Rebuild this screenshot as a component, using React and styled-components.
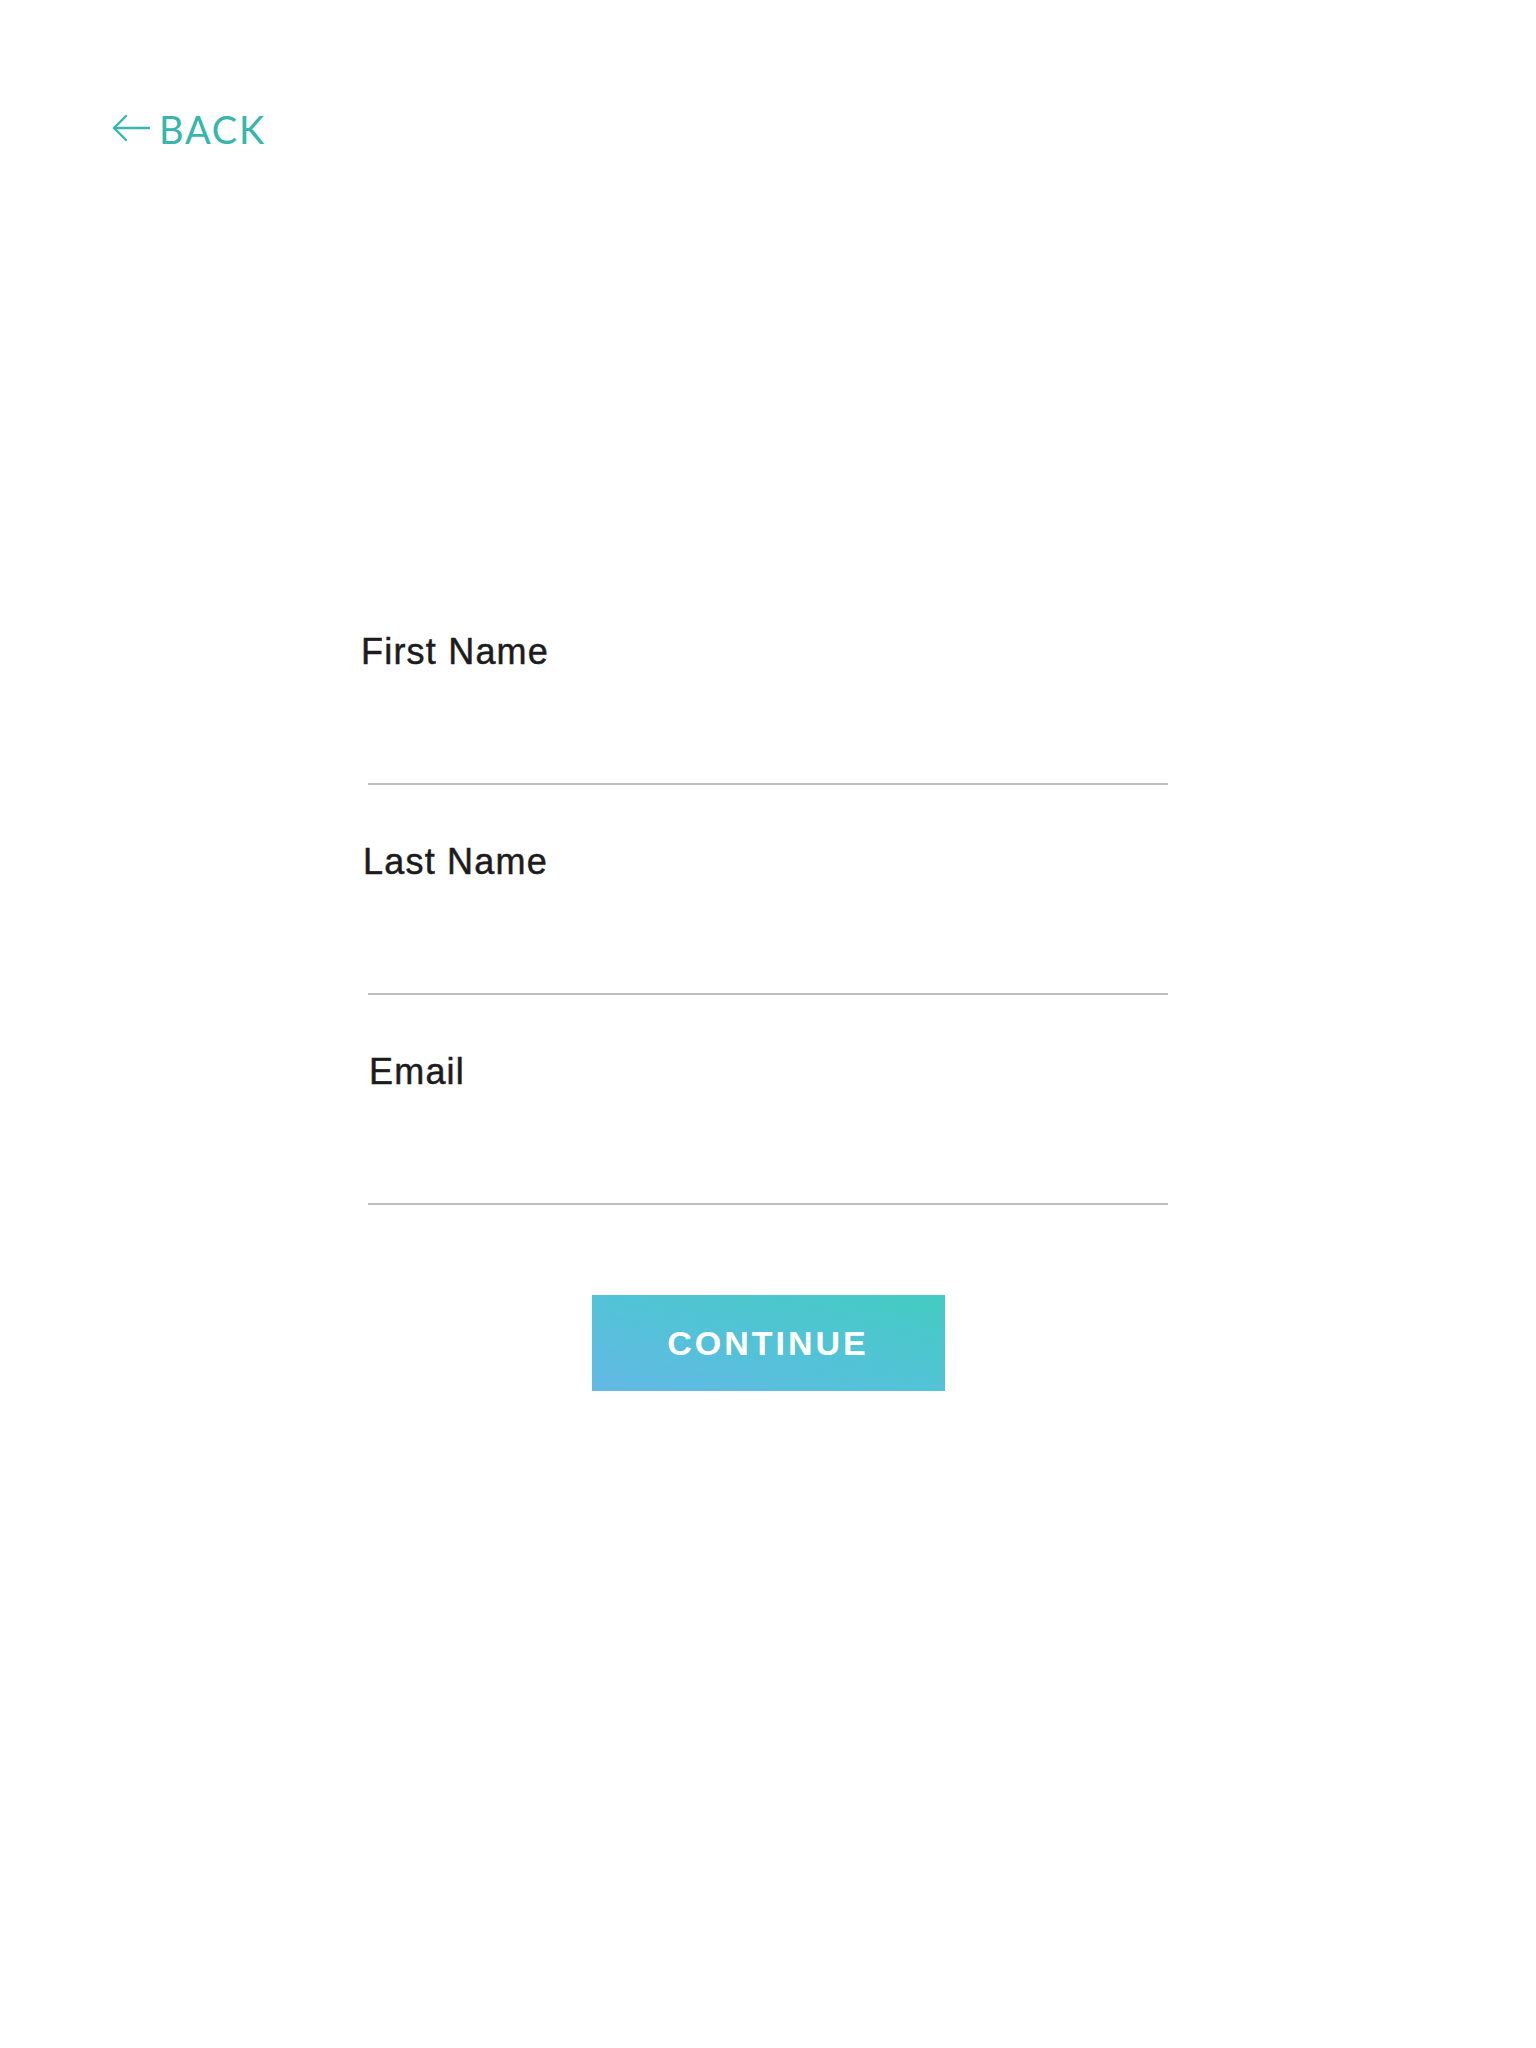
import React from 'react';
import styled, { createGlobalStyle } from 'styled-components';

const GlobalStyle = createGlobalStyle`
  body {
    margin: 0;
    background: #ffffff;
    font-family: "Liberation Sans", Arial, sans-serif;
  }
`;

const Page = styled.div`
  min-height: 2048px;
  padding-top: 110px;
  box-sizing: border-box;
  background: #ffffff;
`;

const Header = styled.header`
  padding-left: 111px;
`;

const BackLink = styled.a`
  display: inline-flex;
  align-items: center;
  gap: 8px;
  height: 38px;
  color: #37b6ae;
  font-family: "Lato", "Liberation Sans", sans-serif;
  font-weight: 400;
  font-size: 38px;
  line-height: 38px;
  letter-spacing: 1.8px;
  text-decoration: none;
  cursor: pointer;

  svg {
    display: block;
    margin-top: -2px;
  }
`;

const Form = styled.form`
  width: 800px;
  margin: 486px auto 0;
  display: flex;
  flex-direction: column;
  gap: 59px;
`;

const Field = styled.label`
  display: flex;
  flex-direction: column;
`;

const Label = styled.span`
  display: block;
  margin-left: ${(p) => p.$shift || 0}px;
  color: #1c1c1c;
  font-size: 36px;
  line-height: 36px;
  letter-spacing: 1.2px;
  -webkit-text-stroke: 0.5px #1c1c1c;
`;

const Input = styled.input`
  display: block;
  width: 100%;
  height: 115px;
  box-sizing: border-box;
  border: none;
  border-bottom: 2px solid #bdbdbd;
  background: transparent;
  outline: none;
  font-family: inherit;
  font-size: 32px;
  padding: 0;
`;

const Button = styled.button`
  display: block;
  width: 353px;
  height: 96px;
  margin: 31px auto 0;
  border: none;
  border-radius: 0;
  background: linear-gradient(to top right, #63b8e5 0%, #52c3d6 50%, #44ccc2 100%);
  color: #ffffff;
  font-family: "Liberation Sans", Arial, sans-serif;
  font-weight: 700;
  font-size: 34px;
  letter-spacing: 3px;
  cursor: pointer;
`;

const fields = [
  { label: 'First Name', type: 'text', shift: -7 },
  { label: 'Last Name', type: 'text', shift: -5 },
  { label: 'Email', type: 'email', shift: 1 },
];

const App = () => {
  return (
    <Page>
      <GlobalStyle />
      <Header>
        <BackLink>
          <svg width="40" height="30" viewBox="0 0 40 30" fill="none" stroke="currentColor" strokeWidth="2.4" strokeLinecap="round" strokeLinejoin="round">
            <line x1="3" y1="15" x2="38" y2="15" />
            <polyline points="15,3 3,15 15,27" />
          </svg>
          BACK
        </BackLink>
      </Header>

      <Form onSubmit={(e) => e.preventDefault()}>
        {fields.map((f) => (
          <Field key={f.label}>
            <Label $shift={f.shift}>{f.label}</Label>
            <Input type={f.type} />
          </Field>
        ))}
        <Button type="submit">CONTINUE</Button>
      </Form>
    </Page>
  );
};

export default App;
